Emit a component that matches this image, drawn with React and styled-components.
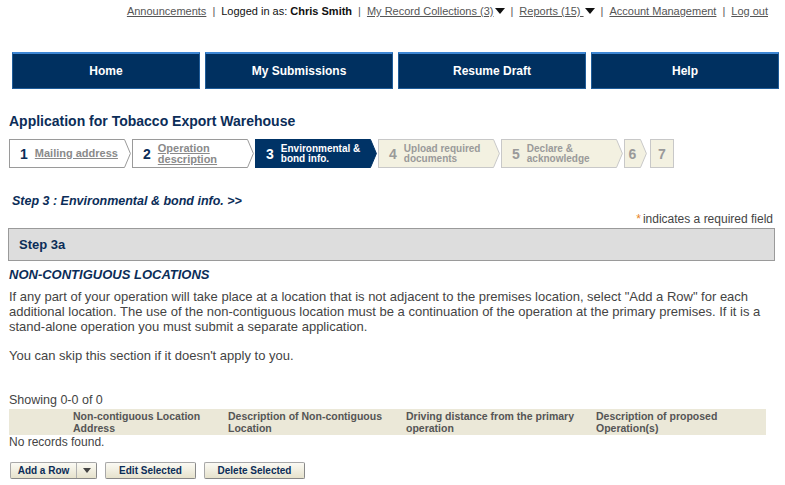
import React from "react";
import styled, { createGlobalStyle } from "styled-components";

const GlobalStyle = createGlobalStyle`
  body {
    margin: 0;
    background: #ffffff;
    font-family: "Liberation Sans", Arial, sans-serif;
  }
`;

const NAVY = "#0b2d58";

const Page = styled.div`
  width: 785px;
  height: 485px;
  overflow: hidden;
  padding-left: 9px;
  box-sizing: border-box;
`;

const TopBar = styled.div`
  display: flex;
  justify-content: flex-end;
  align-items: center;
  height: 22px;
  padding-right: 17px;
  font-size: 11px;
  color: #222;
`;

const TopLink = styled.a`
  color: #555;
  text-decoration: underline;
  display: inline-flex;
  align-items: center;
  gap: 1px;
`;

const Sep = styled.span`
  color: #555;
  margin: 0 6px;
`;

const Who = styled.span`
  color: #111;
  b {
    font-weight: bold;
  }
`;

const Caret = () => (
  <svg width="10" height="6" viewBox="0 0 10 6">
    <path d="M0 0 H10 L5 6 Z" fill="#111" />
  </svg>
);

const Nav = styled.nav`
  display: flex;
  gap: 5px;
  margin-top: 30px;
  padding-left: 3px;
`;

const NavButton = styled.a`
  width: 188px;
  height: 37px;
  box-sizing: border-box;
  display: flex;
  align-items: center;
  justify-content: center;
  padding-bottom: 1px;
  background: #003060;
  border: 1px solid #1f5c99;
  border-top: 2px solid #3d86d4;
  color: #fff;
  font-weight: bold;
  font-size: 12px;
`;

const Title = styled.h1`
  margin: 23px 0 0;
  font-size: 14px;
  line-height: 18px;
  color: ${NAVY};
`;

const Stepper = styled.div`
  display: flex;
  margin-top: 9px;
  height: 29px;
`;

const palette = {
  done: { bg: "#ffffff", border: "#9a9a9a", num: NAVY, label: "#8a8a8a" },
  active: { bg: "#003366", border: "#003366", num: "#ffffff", label: "#ffffff" },
  todo: { bg: "#f3f1e1", border: "#c8c8c8", num: "#9a9a9a", label: "#9a9a9a" },
};

const Step = styled.div`
  display: flex;
  margin-right: ${(p) => (p.$last ? 0 : 1)}px;
  margin-left: ${(p) => (p.$last ? 2 : 0)}px;
`;

const StepBody = styled.div`
  width: ${(p) => p.$w}px;
  height: 29px;
  box-sizing: border-box;
  display: flex;
  align-items: center;
  justify-content: ${(p) => (p.$center ? "center" : "flex-start")};
  padding-left: ${(p) => (p.$center ? 0 : 10)}px;
  gap: 7px;
  background: ${(p) => palette[p.$v].bg};
  border: 1px solid ${(p) => palette[p.$v].border};
  border-right: ${(p) => (p.$last ? `1px solid ${palette[p.$v].border}` : "none")};
`;

const StepNum = styled.span`
  font-size: 14px;
  font-weight: bold;
  color: ${(p) => palette[p.$v].num};
`;

const StepLabel = styled.span`
  display: block;
  font-size: ${(p) => (p.$v === "done" ? 11 : 10)}px;
  line-height: ${(p) => (p.$v === "done" ? 11 : 10)}px;
  font-weight: bold;
  color: ${(p) => palette[p.$v].label};
  text-decoration: ${(p) => (p.$v === "done" ? "underline" : "none")};
`;

const StepArrow = ({ v }) => (
  <svg width="7" height="29" viewBox="0 0 7 29">
    <path
      d="M0 0.5 H0.5 L6.4 14.5 L0.5 28.5 H0"
      fill={palette[v].bg}
      stroke={palette[v].border}
      strokeWidth="1"
    />
  </svg>
);

const steps = [
  { n: 1, label: ["Mailing address"], v: "done" },
  { n: 2, label: ["Operation", "description"], v: "done" },
  { n: 3, label: ["Environmental &", "bond info."], v: "active" },
  { n: 4, label: ["Upload required", "documents"], v: "todo" },
  { n: 5, label: ["Declare &", "acknowledge"], v: "todo" },
];

const StepHeading = styled.h2`
  margin: 25px 0 0 3px;
  font-size: 12.5px;
  line-height: 16px;
  font-style: italic;
  font-weight: bold;
  color: ${NAVY};
`;

const Required = styled.div`
  margin-top: 3px;
  padding-right: 12px;
  text-align: right;
  font-size: 12px;
  line-height: 14px;
  color: #444;
  span {
    color: #e8831e;
    margin-right: 2px;
  }
`;

const SubBox = styled.div`
  margin: 2px 10px 0 -1px;
  height: 33px;
  box-sizing: border-box;
  display: flex;
  align-items: center;
  padding-left: 10px;
  background: #dddddd;
  border: 1px solid #9a9a9a;
  font-size: 13px;
  font-weight: bold;
  color: ${NAVY};
`;

const SectionTitle = styled.h3`
  margin: 6px 0 0;
  font-size: 13px;
  line-height: 16px;
  font-style: italic;
  font-weight: bold;
  color: ${NAVY};
`;

const Para = styled.p`
  margin: ${(p) => p.$top}px 0 0;
  width: 772px;
  font-size: 13px;
  line-height: 15px;
  color: #444;
`;

const Showing = styled.div`
  margin-top: 30px;
  font-size: 12.5px;
  line-height: 14px;
  color: #444;
`;

const Table = styled.div`
  width: 757px;
  margin-top: 2px;
`;

const HeadRow = styled.div`
  display: grid;
  grid-template-columns: 64px 155px 178px 190px 1fr;
  height: 26px;
  align-items: center;
  background: #ebe8d8;
`;

const HeadCell = styled.div`
  font-size: 10.5px;
  line-height: 12px;
  font-weight: bold;
  color: #555;
`;

const Empty = styled.div`
  font-size: 12px;
  line-height: 14px;
  color: #444;
`;

const Actions = styled.div`
  display: flex;
  gap: 8px;
  margin-top: 13px;
  padding-left: 1px;
`;

const Btn = styled.button`
  height: 17px;
  box-sizing: border-box;
  display: flex;
  align-items: center;
  padding: 0;
  width: ${(p) => p.$w}px;
  justify-content: center;
  background: linear-gradient(#fbfaf4, #e6e2cc);
  border: 1px solid #a8a8a8;
  border-right-color: #888;
  border-bottom-color: #888;
  border-radius: 2px;
  font-family: "Liberation Sans", Arial, sans-serif;
  font-size: 10px;
  font-weight: bold;
  color: ${NAVY};
`;

const SplitMain = styled.span`
  flex: 1;
  text-align: center;
  line-height: 15px;
  border-right: 1px solid #b0b0b0;
`;

const SplitCaret = styled.span`
  width: 19px;
  display: flex;
  justify-content: center;
`;

export default function App() {
  return (
    <>
      <GlobalStyle />
      <Page>
        <TopBar>
          <TopLink>Announcements</TopLink>
          <Sep>|</Sep>
          <Who>
            Logged in as: <b>Chris Smith</b>
          </Who>
          <Sep>|</Sep>
          <TopLink>
            My Record Collections (3)
            <Caret />
          </TopLink>
          <Sep>|</Sep>
          <TopLink>
            Reports (15)&nbsp;
            <Caret />
          </TopLink>
          <Sep>|</Sep>
          <TopLink>Account Management</TopLink>
          <Sep>|</Sep>
          <TopLink>Log out</TopLink>
        </TopBar>

        <Nav>
          <NavButton>Home</NavButton>
          <NavButton>My Submissions</NavButton>
          <NavButton>Resume Draft</NavButton>
          <NavButton>Help</NavButton>
        </Nav>

        <Title>Application for Tobacco Export Warehouse</Title>

        <Stepper>
          {steps.map((s) => (
            <Step key={s.n}>
              <StepBody $v={s.v} $w={115}>
                <StepNum $v={s.v}>{s.n}</StepNum>
                <StepLabel $v={s.v}>
                  {s.label.map((l, i) => (
                    <React.Fragment key={i}>
                      {i > 0 && <br />}
                      {l}
                    </React.Fragment>
                  ))}
                </StepLabel>
              </StepBody>
              <StepArrow v={s.v} />
            </Step>
          ))}
          <Step>
            <StepBody $v="todo" $w={16} $center>
              <StepNum $v="todo">6</StepNum>
            </StepBody>
            <StepArrow v="todo" />
          </Step>
          <Step $last>
            <StepBody $v="todo" $w={24} $center $last>
              <StepNum $v="todo">7</StepNum>
            </StepBody>
          </Step>
        </Stepper>

        <StepHeading>Step 3 : Environmental &amp; bond info. &gt;&gt;</StepHeading>
        <Required>
          <span>*</span>indicates a required field
        </Required>

        <SubBox>Step 3a</SubBox>

        <SectionTitle>NON-CONTIGUOUS LOCATIONS</SectionTitle>
        <Para $top={6}>
          If any part of your operation will take place at a location that is not adjacent to the
          premises location, select "Add a Row" for each additional location. The use of the
          non-contiguous location must be a continuation of the operation at the primary premises.
          If it is a stand-alone operation you must submit a separate application.
        </Para>
        <Para $top={14}>You can skip this section if it doesn't apply to you.</Para>

        <Showing>Showing 0-0 of 0</Showing>
        <Table>
          <HeadRow>
            <HeadCell />
            <HeadCell>
              Non-contiguous Location
              <br />
              Address
            </HeadCell>
            <HeadCell>
              Description of Non-contiguous
              <br />
              Location
            </HeadCell>
            <HeadCell>
              Driving distance from the primary
              <br />
              operation
            </HeadCell>
            <HeadCell>
              Description of proposed
              <br />
              Operation(s)
            </HeadCell>
          </HeadRow>
          <Empty>No records found.</Empty>
        </Table>

        <Actions>
          <Btn $w={87}>
            <SplitMain>Add a Row</SplitMain>
            <SplitCaret>
              <svg width="8" height="5" viewBox="0 0 8 5">
                <path d="M0 0 H8 L4 5 Z" fill="#444" />
              </svg>
            </SplitCaret>
          </Btn>
          <Btn $w={91}>Edit Selected</Btn>
          <Btn $w={101}>Delete Selected</Btn>
        </Actions>
      </Page>
    </>
  );
}
